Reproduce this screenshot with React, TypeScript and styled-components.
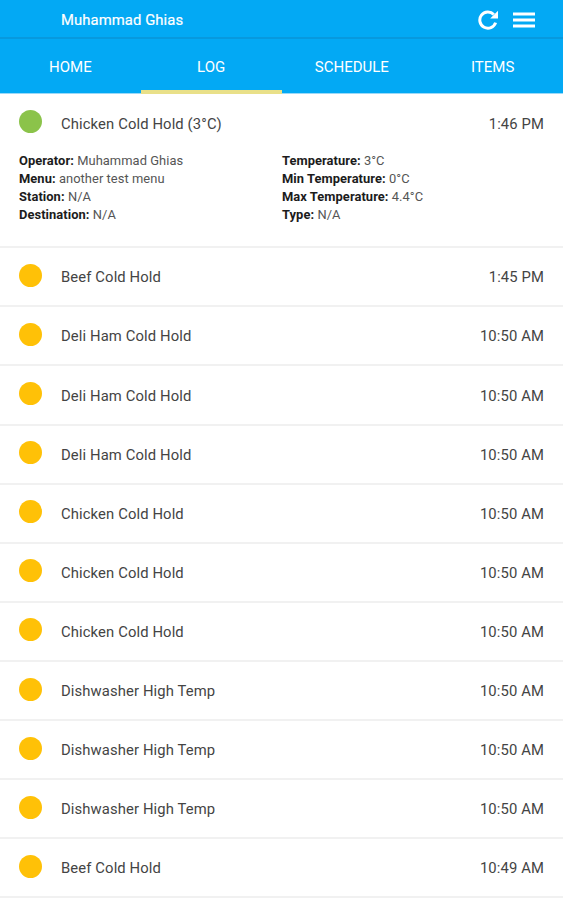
import React from "react";
import styled, { createGlobalStyle } from "styled-components";

const GlobalStyle = createGlobalStyle`
  * { box-sizing: border-box; }
  html, body { margin: 0; background: #fff; overflow: hidden; }
  body { font-family: Roboto, "Liberation Sans", sans-serif; color: #444; }
`;

const Screen = styled.div`
  width: 563px;
  height: 900px;
  overflow: hidden;
  background: #fff;
`;

const Header = styled.header`
  display: flex;
  align-items: center;
  height: 39px;
  padding: 2px 28px 0 61px;
  background: #03a9f4;
  border-bottom: 2px solid #0799de;
  color: #fff;
`;

const UserName = styled.div`
  flex: 1;
  padding-top: 1px;
  font-size: 14.8px;
  font-weight: 400;
  letter-spacing: 0.1px;
  line-height: 20px;
  -webkit-text-stroke: 0.2px #fff;
`;

const RefreshIcon = styled.svg`
  width: 20px;
  height: 20px;
  margin-right: 15px;
  fill: none;
  stroke: #fff;
  stroke-width: 3;
`;

const MenuIcon = styled.svg`
  width: 22px;
  height: 16px;
  stroke: #fff;
  stroke-width: 2.8;
`;

const Tabs = styled.nav`
  display: grid;
  grid-template-columns: repeat(4, 1fr);
  height: 55px;
  background: #03a9f4;
  border-bottom: 1px solid #9bd9f8;
`;

const Tab = styled.div<{ $active?: boolean }>`
  display: flex;
  align-items: center;
  justify-content: center;
  margin-bottom: ${(p) => (p.$active ? "-1px" : "0")};
  padding-top: ${(p) => (p.$active ? "5px" : "5px")};
  border-bottom: ${(p) => (p.$active ? "4px solid #e9e089" : "3px solid transparent")};
  color: #fff;
  font-size: 15px;
`;

const Row = styled.div`
  display: flex;
  align-items: center;
  height: 59.1px;
  padding: 0 19px;
  font-size: 14.8px;
  letter-spacing: 0.12px;
  border-bottom: 2px solid #f1f1f1;
`;

const ExpandedRow = styled(Row)`
  height: 58px;
  border-bottom: 0;
`;

const Dot = styled.span<{ $done?: boolean }>`
  width: 23px;
  height: 23px;
  margin: 0 19px 3px 0;
  border-radius: 50%;
  background: ${(p) => (p.$done ? "#8bc34a" : "#ffc107")};
`;

const Title = styled.span`
  flex: 1;
  padding-top: 1px;
`;

const Time = styled.span`
  padding-top: 1px;
`;

const Details = styled.div`
  display: grid;
  grid-template-columns: 263px 1fr;
  height: 96.3px;
  padding: 0 19px;
  border-bottom: 2px solid #f1f1f1;
  font-size: 12.9px;
  letter-spacing: 0.06px;
  line-height: 17.9px;
`;

const Field = styled.div`
  white-space: nowrap;
  color: #555;
`;

const Label = styled.b`
  color: #1c1c1c;
  font-weight: 700;
`;

const left = [["Operator", "Muhammad Ghias"], ["Menu", "another test menu"], ["Station", "N/A"], ["Destination", "N/A"]];
const right = [["Temperature", "3°C"], ["Min Temperature", "0°C"], ["Max Temperature", "4.4°C"], ["Type", "N/A"]];
const entries = [
  ["Beef Cold Hold", "1:45 PM"],
  ["Deli Ham Cold Hold", "10:50 AM"],
  ["Deli Ham Cold Hold", "10:50 AM"],
  ["Deli Ham Cold Hold", "10:50 AM"],
  ["Chicken Cold Hold", "10:50 AM"],
  ["Chicken Cold Hold", "10:50 AM"],
  ["Chicken Cold Hold", "10:50 AM"],
  ["Dishwasher High Temp", "10:50 AM"],
  ["Dishwasher High Temp", "10:50 AM"],
  ["Dishwasher High Temp", "10:50 AM"],
  ["Beef Cold Hold", "10:49 AM"],
];

const Fields = ({ items }: { items: string[][] }) => (
  <div>
    {items.map(([label, value]) => (
      <Field key={label}><Label>{label}:</Label> {value}</Field>
    ))}
  </div>
);

export default function App() {
  return (
    <Screen>
      <GlobalStyle />
      <Header>
        <UserName>Muhammad Ghias</UserName>
        <RefreshIcon viewBox="0 0 20 20">
          <path d="M17.6 12.6A8.1 8.1 0 1 1 15.8 4.5" />
          <path d="M20 0.8V8.6H12.2Z" fill="#fff" stroke="none" />
        </RefreshIcon>
        <MenuIcon viewBox="0 0 22 16">
          <path d="M0 2h22M0 8h22M0 14h22" />
        </MenuIcon>
      </Header>
      <Tabs>
        <Tab>HOME</Tab>
        <Tab $active>LOG</Tab>
        <Tab>SCHEDULE</Tab>
        <Tab>ITEMS</Tab>
      </Tabs>
      <ExpandedRow>
        <Dot $done />
        <Title>Chicken Cold Hold (3°C)</Title>
        <Time>1:46 PM</Time>
      </ExpandedRow>
      <Details>
        <Fields items={left} />
        <Fields items={right} />
      </Details>
      {entries.map(([title, time], i) => (
        <Row key={i}>
          <Dot />
          <Title>{title}</Title>
          <Time>{time}</Time>
        </Row>
      ))}
    </Screen>
  );
}
